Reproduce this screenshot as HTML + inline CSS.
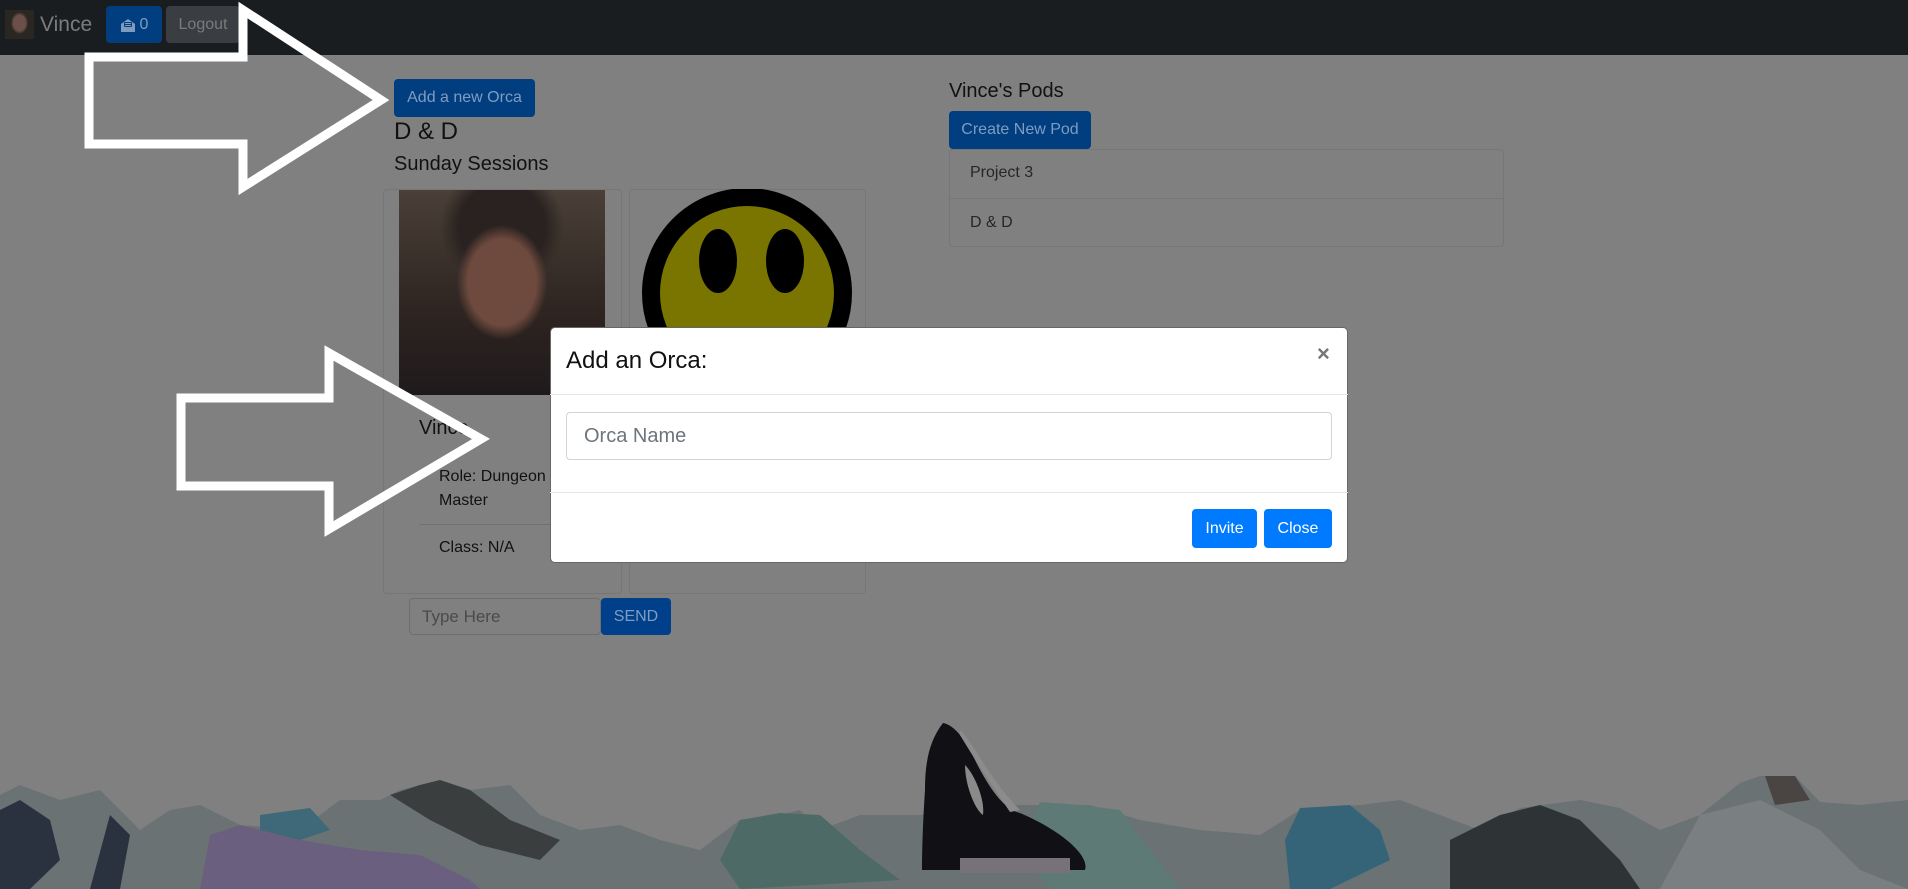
<!DOCTYPE html>
<html><head><meta charset="utf-8"><style>
*{box-sizing:border-box;margin:0;padding:0}
body{width:1908px;height:889px;overflow:hidden;background:#808080;font-family:"Liberation Sans",sans-serif;position:relative;color:#111}
.a{position:absolute}
.nav{left:0;top:0;width:1908px;height:55px;background:#1a1d20}
.btn{position:absolute;border-radius:4px;color:#7f9cc0;font-size:16px;display:flex;align-items:center;justify-content:center;background:#003e80}
.card{border:1px solid #767676;border-radius:4px}
.modal{left:550px;top:327px;width:798px;height:236px;background:#fff;border-radius:5px;border:1px solid #666}
.mb{background:#007bff;color:#fff}
</style></head><body>
<div class="a nav"></div>
<div class="a" style="left:5px;top:10px;width:29px;height:29px;background:radial-gradient(ellipse 30% 38% at 50% 45%,#6a5048 0 70%,#2a2622 100%)"></div>
<div class="a" style="left:40px;top:13px;font-size:21px;color:#7c7c7c">Vince</div>
<div class="btn" style="left:106px;top:6px;width:56px;height:37px;font-size:16px"><svg width="16" height="16" viewBox="0 0 16 16" style="margin-right:4px"><path d="M1 7 L8 2 L15 7 V15 H1Z" fill="#7f9cc0"/><rect x="4" y="5" width="8" height="5" rx="1" fill="#003e80"/><rect x="5" y="6" width="6" height="1" fill="#7f9cc0"/><rect x="5" y="8" width="6" height="1" fill="#7f9cc0"/></svg>0</div>
<div class="btn" style="left:166px;top:6px;width:74px;height:37px;background:#3a3e42;color:#7b7b7b">Logout</div>

<div class="btn" style="left:394px;top:79px;width:141px;height:38px">Add a new Orca</div>
<div class="a" style="left:394px;top:118px;font-size:24px">D &amp; D</div>
<div class="a" style="left:394px;top:153px;font-size:20px">Sunday Sessions</div>
<div class="a card" style="left:383px;top:189px;width:239px;height:405px"></div>
<div class="a" style="left:399px;top:190px;width:206px;height:205px;background:radial-gradient(ellipse 22% 28% at 50% 45%,#6e4a3e 0 75%,transparent 100%),radial-gradient(ellipse 30% 30% at 50% 18%,#2a2220 0 70%,transparent 100%),linear-gradient(#4a4038,#2e2420 60%,#1e1a1c)"></div>
<div class="a card" style="left:629px;top:189px;width:237px;height:405px"></div>
<svg class="a" style="left:629px;top:189px" width="237" height="140"><circle cx="118" cy="104" r="96" fill="#7a7400" stroke="#000" stroke-width="18"/><ellipse cx="89" cy="72" rx="19" ry="32"/><ellipse cx="156" cy="72" rx="19" ry="32"/></svg>
<div class="a" style="left:419px;top:417px;font-size:20px">Vince</div>
<div class="a" style="left:439px;top:465px;font-size:16px;line-height:24px">Role: Dungeon<br>Master</div>
<div class="a" style="left:419px;top:524px;width:170px;height:1px;background:#707070"></div>
<div class="a" style="left:439px;top:539px;font-size:16px">Class: N/A</div>
<div class="a" style="left:409px;top:598px;width:192px;height:37px;border:1px solid #6e6e6e;border-radius:4px;font-size:17px;color:#4a4a4a;padding:8px 12px">Type Here</div>
<div class="btn" style="left:601px;top:598px;width:70px;height:37px;background:#00408a">SEND</div>

<div class="a" style="left:949px;top:80px;font-size:20px">Vince's Pods</div>
<div class="btn" style="left:949px;top:111px;width:142px;height:38px">Create New Pod</div>
<div class="a card" style="left:949px;top:149px;width:555px;height:98px"></div>
<div class="a" style="left:949px;top:198px;width:555px;height:1px;background:#767676"></div>
<div class="a" style="left:970px;top:164px;font-size:16px;color:#262626">Project 3</div>
<div class="a" style="left:970px;top:214px;font-size:16px;color:#262626">D &amp; D</div>

<svg class="a" style="left:0;top:0" width="1908" height="889">
<g stroke="#fff" stroke-width="9" fill="none" stroke-linejoin="miter">
<polygon points="89,57 243,57 243,10 381,100 243,187 243,144 89,144"/>
<polygon points="181,398 329,398 329,353 481,439 329,529 329,486 181,486"/>
</g>
<g>
<polygon points="0,795 20,785 60,800 100,790 140,830 170,810 200,805 240,825 300,830 340,800 380,800 400,790 420,785 440,780 470,790 510,785 540,815 580,830 620,825 660,840 700,850 740,820 760,820 800,810 820,830 860,815 920,815 1000,805 1040,805 1090,805 1140,820 1200,830 1260,835 1300,810 1360,805 1400,800 1440,815 1480,830 1520,808 1580,800 1620,808 1660,830 1700,815 1740,783 1760,776 1795,776 1820,802 1860,805 1908,800 1908,889 0,889" fill="#6a7274"/>
<polygon points="20,800 50,820 60,860 30,889 0,889 0,810" fill="#2a3240"/>
<polygon points="110,815 130,835 120,889 90,889" fill="#2a3240"/>
<polygon points="210,835 240,825 300,840 360,850 420,855 470,880 480,889 200,889" fill="#6a5f7e"/>
<polygon points="260,815 310,808 330,830 300,840 260,830" fill="#3f6878"/>
<polygon points="390,795 420,785 440,780 470,790 510,820 560,840 540,860 480,845 430,820" fill="#3a3e3e"/>
<polygon points="740,820 780,813 820,815 860,850 900,880 740,889 720,860" fill="#4e6a66"/>
<polygon points="1040,802 1080,805 1120,810 1150,850 1180,889 1050,889 1020,850" fill="#5e7a76"/>
<polygon points="1300,808 1350,805 1380,830 1390,860 1330,889 1290,889 1285,840" fill="#356478"/>
<polygon points="1450,840 1500,815 1540,805 1580,820 1620,860 1640,889 1450,889" fill="#2e3436"/>
<polygon points="1700,815 1760,800 1820,830 1860,870 1908,889 1660,889" fill="#7a8082"/>
<polygon points="1765,776 1795,776 1810,800 1775,805" fill="#4a4442"/>
<path d="M943,723 C930,740 925,760 925,790 C923,820 922,850 922,870 L1085,870 C1090,855 1060,830 1020,813 C1005,810 990,790 975,760 C965,740 955,725 943,723Z" fill="#111014"/>
<path d="M960,730 C975,745 990,780 1020,810 L1010,812 C995,790 975,760 960,735Z" fill="#8c8c8c"/>
<path d="M965,765 C975,775 985,800 983,815 C975,810 965,785 965,765Z" fill="#8a8a8a"/>
<rect x="960" y="858" width="110" height="15" fill="#77727a"/>
</g>
</svg>

<div class="a modal"></div>
<div class="a" style="left:566px;top:347px;font-size:24px;color:#111">Add an Orca:</div>
<div class="a" style="left:1317px;top:341px;font-size:22px;font-weight:bold;color:#777">×</div>
<div class="a" style="left:550px;top:394px;width:798px;height:1px;background:#e5e5e5"></div>
<div class="a" style="left:566px;top:412px;width:766px;height:48px;border:1px solid #ced4da;border-radius:4px;font-size:20px;color:#6c757d;padding:12px 17px">Orca Name</div>
<div class="a" style="left:550px;top:492px;width:798px;height:1px;background:#e5e5e5"></div>
<div class="btn mb" style="left:1192px;top:509px;width:65px;height:39px">Invite</div>
<div class="btn mb" style="left:1264px;top:509px;width:68px;height:39px">Close</div>
</body></html>
